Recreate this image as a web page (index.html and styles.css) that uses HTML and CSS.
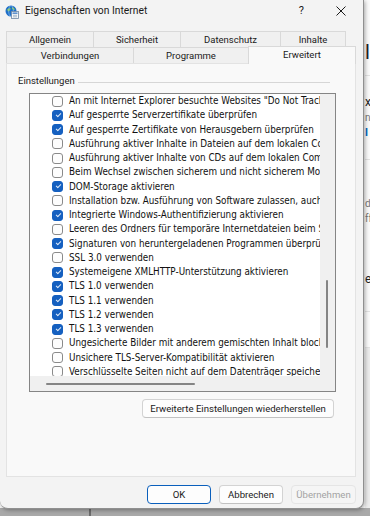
FILE: index.html
```html
<!DOCTYPE html>
<html lang="de">
<head>
    <meta charset="UTF-8">
    <meta name="viewport" content="width=device-width, initial-scale=1.0">
    <title>Eigenschaften von Internet</title>
    <link rel="stylesheet" href="styles.css">
</head>
<body>
<div class="desktop">
    <!-- window behind the dialog, only its left edge shows -->
    <div class="backdrop">
        <div class="bg-page">
            <div class="bg-head"><span class="bg-big">li</span></div>
            <div class="bg-block b1">
                <span class="bg-text">xp</span>
                <span class="bg-small">ne</span>
                <span class="bg-link">l</span>
            </div>
            <div class="bg-block b2">
                <span class="bg-small">d</span>
                <span class="bg-small">ff</span>
                <span class="bg-text es">es</span>
            </div>
            <div class="bg-block b3"></div>
            <div class="bg-block b4"></div>
        </div>
        <div class="bg-bottom"><span class="bg-split"></span></div>
    </div>

    <div class="dialog">
        <div class="titlebar">
            <svg class="app-icon" width="14" height="14" viewBox="0 0 14 14">
                <circle cx="6" cy="6" r="5.5" fill="#1e6fc9"/>
                <path d="M2 4.5 Q4 2.5 6 3.5 Q5 6 3 6.5 Z" fill="#7fc35a"/>
                <path d="M7 2 Q9.5 2.5 10 5 Q8 5 7 3.5 Z" fill="#7fc35a"/>
                <ellipse cx="6" cy="6" rx="2.3" ry="5.5" fill="none" stroke="#9cc8f2" stroke-width="0.6"/>
                <rect x="6.5" y="6.5" width="7" height="7" fill="#f4f6f8" stroke="#6f87a3" stroke-width="0.8"/>
                <rect x="7.5" y="7.5" width="5" height="1.3" fill="#3a78c2"/>
                <line x1="8" y1="10.3" x2="12" y2="10.3" stroke="#8aa0b8" stroke-width="0.7"/>
                <line x1="8" y1="11.8" x2="12" y2="11.8" stroke="#8aa0b8" stroke-width="0.7"/>
            </svg>
            <span class="title">Eigenschaften von Internet</span>
            <span class="help">?</span>
            <svg class="close" width="10" height="10" viewBox="0 0 10 10">
                <path d="M0.5 0.5 L9.5 9.5 M9.5 0.5 L0.5 9.5" stroke="#1a1a1a" stroke-width="1"/>
            </svg>
        </div>

        <div class="tabs">
            <div class="tabrow">
                <div class="tab t-allg">Allgemein</div>
                <div class="tab t-sich">Sicherheit</div>
                <div class="tab t-daten">Datenschutz</div>
                <div class="tab t-inh">Inhalte</div>
            </div>
            <div class="tabrow">
                <div class="tab t-verb">Verbindungen</div>
                <div class="tab t-prog">Programme</div>
                <div class="tab t-erw active">Erweitert</div>
            </div>
        </div>

        <div class="panel">
            <div class="group">
                <span class="legend">Einstellungen</span>
                <span class="rule"></span>
            </div>
            <div class="listbox">
                <div class="list-main">
                    <ul class="items">
                        <li><span class="cb"></span>An mit Internet Explorer besuchte Websites "Do Not Track</li>
                        <li><span class="cb on"></span>Auf gesperrte Serverzertifikate überprüfen</li>
                        <li><span class="cb on"></span>Auf gesperrte Zertifikate von Herausgebern überprüfen</li>
                        <li><span class="cb"></span>Ausführung aktiver Inhalte in Dateien auf dem lokalen Computer</li>
                        <li><span class="cb"></span>Ausführung aktiver Inhalte von CDs auf dem lokalen Computer</li>
                        <li><span class="cb"></span>Beim Wechsel zwischen sicherem und nicht sicherem Modus</li>
                        <li><span class="cb on"></span>DOM-Storage aktivieren</li>
                        <li><span class="cb"></span>Installation bzw. Ausführung von Software zulassen, auch</li>
                        <li><span class="cb on"></span>Integrierte Windows-Authentifizierung aktivieren</li>
                        <li><span class="cb"></span>Leeren des Ordners für temporäre Internetdateien beim Schließen</li>
                        <li><span class="cb on"></span>Signaturen von heruntergeladenen Programmen überprüfen</li>
                        <li><span class="cb"></span>SSL 3.0 verwenden</li>
                        <li><span class="cb on"></span>Systemeigene XMLHTTP-Unterstützung aktivieren</li>
                        <li><span class="cb on"></span>TLS 1.0 verwenden</li>
                        <li><span class="cb on"></span>TLS 1.1 verwenden</li>
                        <li><span class="cb on"></span>TLS 1.2 verwenden</li>
                        <li><span class="cb on"></span>TLS 1.3 verwenden</li>
                        <li><span class="cb"></span>Ungesicherte Bilder mit anderem gemischten Inhalt blockieren</li>
                        <li><span class="cb"></span>Unsichere TLS-Server-Kompatibilität aktivieren</li>
                        <li><span class="cb"></span>Verschlüsselte Seiten nicht auf dem Datenträger speichern</li>
                    </ul>
                    <div class="vscroll"><div class="vthumb"></div></div>
                </div>
                <div class="hscroll">
                    <div class="htrack"><div class="hthumb"></div></div>
                    <div class="corner"></div>
                </div>
            </div>
            <div class="restore-row">
                <button class="btn restore">Erweiterte Einstellungen wiederherstellen</button>
            </div>
        </div>

        <div class="footer">
            <button class="btn default">OK</button>
            <button class="btn">Abbrechen</button>
            <button class="btn disabled">Übernehmen</button>
        </div>
    </div>
</div>
</body>
</html>
```

FILE: styles.css
```css
body {
    margin: 0;
    padding: 0;
    overflow: hidden;
    font-family: Roboto, "Liberation Sans", Arial, sans-serif;
    color: #1a1a1a;
}
.desktop {
    position: relative;
    width: 370px;
    height: 516px;
    overflow: hidden;
}

/* background window */
.backdrop {
    display: flex;
    flex-direction: column;
    width: 370px;
    height: 516px;
}
.bg-page {
    height: 508px;
    padding-left: 365px;
    background: #fafafa;
    display: flex;
    flex-direction: column;
}
.bg-head {
    height: 76px;
    border-bottom: 1px solid #e2e2e2;
    padding-top: 42px;
    box-sizing: border-box;
}
.bg-big {
    font-size: 20px;
    line-height: 20px;
    color: #222;
}
.bg-block {
    display: flex;
    flex-direction: column;
    box-sizing: border-box;
    border-bottom: 1px solid #e2e2e2;
}
.b1 { height: 84px; padding-top: 20px; gap: 3px; }
.b2 { height: 152px; padding-top: 38px; gap: 3px; }
.b3 { height: 36px; }
.b4 { flex: 1; background: #ececec; border-bottom: none; }
.bg-text { font-size: 12px; line-height: 13px; color: #222; }
.bg-small { font-size: 10px; line-height: 12px; color: #777; }
.bg-link { font-size: 11px; line-height: 12px; color: #0067c0; font-weight: bold; }
.es { margin-top: 45px; }
.bg-bottom {
    flex: 1;
    background: #a9a9a9;
    padding-left: 89px;
    display: flex;
}
.bg-split {
    width: 2px;
    background: #6d6d6d;
}

/* dialog window */
.dialog {
    position: absolute;
    left: 0;
    top: 0;
    width: 364px;
    height: 509px;
    box-sizing: border-box;
    background: #f3f3f3;
    border-right: 1px solid #8f8f8f;
    border-bottom: 1px solid #8f8f8f;
    border-radius: 0 0 8px 8px;
    box-shadow: 1px 1px 4px rgba(0, 0, 0, 0.35);
    display: flex;
    flex-direction: column;
}
.titlebar {
    height: 31px;
    display: flex;
    align-items: flex-start;
    padding-top: 3px;
    box-sizing: border-box;
}
.app-icon {
    margin: 2px 0 0 5px;
}
.title {
    margin-left: 6px;
    font-size: 10.3px;
    line-height: 15px;
}
.help {
    margin-left: auto;
    font-size: 11px;
    line-height: 15px;
}
.close {
    margin: 3px 17px 0 32px;
}

.tabs {
    padding-left: 6px;
    font-size: 9.5px;
}
.tabrow {
    display: flex;
    height: 16px;
}
.tab {
    box-sizing: border-box;
    height: 16px;
    border: 1px solid #d9d9d9;
    border-bottom: none;
    margin-right: -1px;
    background: #f0f0f0;
    text-align: center;
    line-height: 16px;
}
.t-allg { width: 88px; }
.t-sich { width: 88px; }
.t-daten { width: 101px; }
.t-inh { width: 66px; }
.t-verb { width: 128px; }
.t-prog { width: 116px; }
.t-erw { width: 108px; }
.tab.active {
    position: relative;
    z-index: 1;
    height: 18px;
    margin-top: -1px;
    background: #f9f9f9;
    line-height: 15px;
}

.panel {
    margin-left: 6px;
    width: 350px;
    height: 414px;
    box-sizing: border-box;
    background: #f9f9f9;
    border: 1px solid #e3e3e3;
    padding: 10px 0 0 11px;
    font-size: 9.5px;
}
.group {
    display: flex;
    align-items: center;
    height: 14px;
}
.legend {
    line-height: 14px;
}
.rule {
    flex: 1;
    height: 1px;
    margin: 2px 25px 0 3px;
    background: #d6d6d6;
}

.listbox {
    margin: 5px 0 0 11px;
    width: 307px;
    height: 299px;
    box-sizing: border-box;
    border: 1px solid #858585;
    background: #fff;
    display: flex;
    flex-direction: column;
}
.list-main {
    display: flex;
    height: 282px;
}
.items {
    list-style: none;
    margin: 0;
    padding: 0 0 0 22px;
    width: 290px;
    box-sizing: border-box;
    overflow: hidden;
    font-family: "DejaVu Sans Condensed", "DejaVu Sans", sans-serif;
    font-size: 9.8px;
    color: #111;
}
.items li {
    height: 14.26px;
    display: flex;
    align-items: center;
    white-space: nowrap;
    line-height: 14px;
}
.cb {
    position: relative;
    flex: none;
    width: 11px;
    height: 11px;
    box-sizing: border-box;
    border: 1px solid #8a8a8a;
    border-radius: 3px;
    background: #fdfdfd;
    margin-right: 6px;
}
.cb.on {
    border-color: #1560c0;
    background: #1560c0;
}
.cb.on::after {
    content: "";
    position: absolute;
    left: 2.5px;
    top: 2px;
    width: 4px;
    height: 2px;
    border-left: 1px solid #dce9f8;
    border-bottom: 1px solid #dce9f8;
    transform: rotate(-45deg);
}
.vscroll {
    width: 15px;
    background: #f0f0f0;
    padding-top: 186px;
    box-sizing: border-box;
}
.vthumb {
    width: 2px;
    height: 68px;
    margin-left: 6px;
    border-radius: 1px;
    background: #858585;
}
.hscroll {
    display: flex;
    flex: 1;
    background: #f0f0f0;
}
.htrack {
    width: 290px;
    display: flex;
    align-items: center;
    padding-left: 16px;
    box-sizing: border-box;
}
.hthumb {
    width: 149px;
    height: 2px;
    border-radius: 1px;
    background: #858585;
}
.corner {
    flex: 1;
}

.btn {
    font-family: inherit;
    font-size: 9.6px;
    color: #1a1a1a;
    height: 19px;
    padding: 0;
    white-space: nowrap;
    box-sizing: border-box;
    background: #fdfdfd;
    border: 1px solid #d3d3d3;
    border-bottom-color: #c2c2c2;
    border-radius: 4px;
}
.restore-row {
    display: flex;
    justify-content: flex-end;
    margin-top: 7px;
    padding-right: 21px;
}
.restore {
    width: 192px;
}
.footer {
    display: flex;
    justify-content: flex-end;
    gap: 8px;
    padding: 8px 7px 0 0;
}
.footer .btn {
    width: 64px;
}
.btn.default {
    border: 1px solid #0a5fbc;
}
.btn.disabled {
    width: 65px;
    color: #a3a3a3;
    background: #f5f5f5;
    border-color: #e5e5e5;
}
```
